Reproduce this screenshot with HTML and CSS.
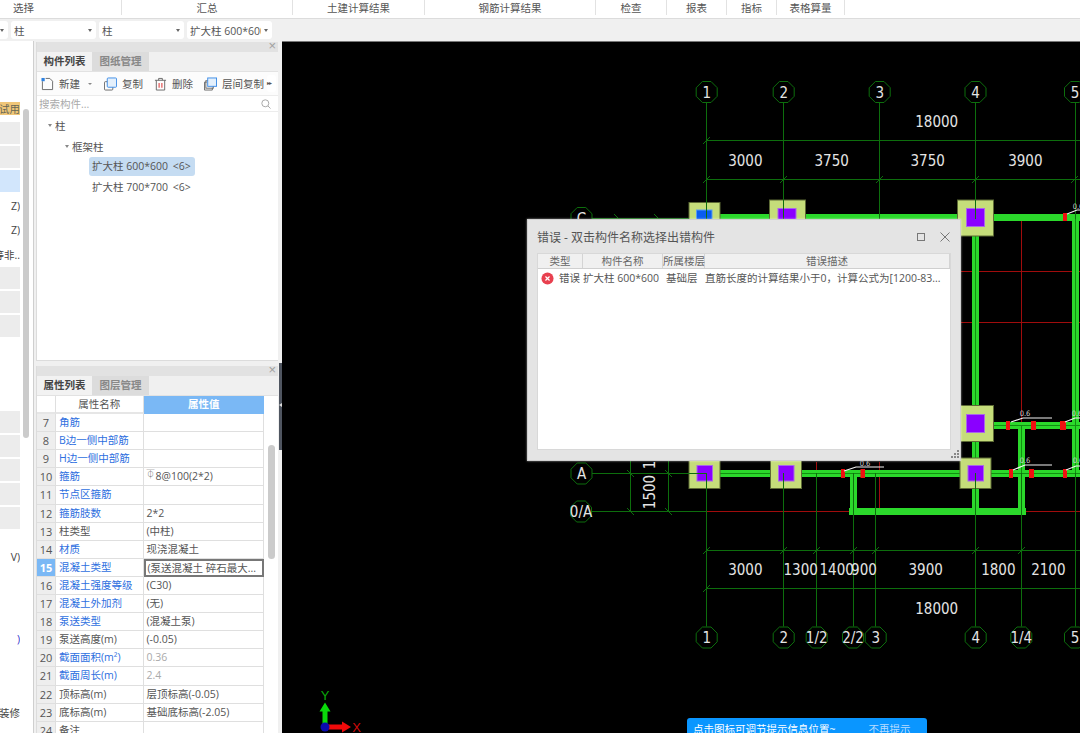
FILE: index.html
```html
<!DOCTYPE html>
<html lang="zh">
<head>
<meta charset="utf-8">
<title>错误 - 双击构件名称选择出错构件</title>
<link rel="stylesheet" href="styles.css">
</head>
<body>
<div class="app">
  <header class="ribbon">
    <span class="rb rb-1"><i class="lead">选择</i></span>
    <span class="rb rb-2">汇总</span>
    <span class="rb rb-3">土建计算结果</span>
    <span class="rb rb-4">钢筋计算结果</span>
    <span class="rb rb-5">检查</span>
    <span class="rb rb-6">报表</span>
    <span class="rb rb-7">指标</span>
    <span class="rb rb-8">表格算量</span>
  </header>
  <div class="selects">
    <div class="sel sel-cut"><b class="caret"></b></div>
    <div class="sel"><span>柱</span><b class="caret"></b></div>
    <div class="sel"><span>柱</span><b class="caret"></b></div>
    <div class="sel"><span class="sel-clip">扩大柱 600*600</span><b class="caret"></b></div>
  </div>
  <main class="workspace">
    <aside class="farleft">
      <div class="scroll-far"></div>
      <div class="fl fl-orange"><span>测试用</span></div>
      <div class="fl fl-grey fl-m1"></div>
      <div class="fl fl-grey"></div>
      <div class="fl fl-blue"></div>
      <div class="fl fl-text"><span>Z)</span></div>
      <div class="fl fl-text"><span>Z)</span></div>
      <div class="fl fl-text"><span>等非..</span></div>
      <div class="fl fl-grey"></div>
      <div class="fl fl-grey"></div>
      <div class="fl fl-grey"></div>
      <div class="fl fl-grey fl-m2"></div>
      <div class="fl fl-grey"></div>
      <div class="fl fl-grey"></div>
      <div class="fl fl-grey"></div>
      <div class="fl fl-grey"></div>
      <div class="fl fl-text fl-m3"><span>V)</span></div>
      <div class="fl fl-text fl-m4 fl-link"><span>)</span></div>
      <div class="fl fl-text fl-m5"><span>装修</span></div>
    </aside>

    <div class="side">
      <section class="panel panel-top">
        <div class="bar"><span class="close">×</span></div>
        <div class="tabs"><span class="tab on">构件列表</span><span class="tab">图纸管理</span></div>
        <div class="tools">
          <span class="tool tool-new">
            <svg class="ico" viewBox="0 0 14 14"><path class="ic-l" d="M1.5 4v9h11V4L9.500 1H5"/><rect class="ic-b" x="0.500" y="0.500" width="3.500" height="3.500"/></svg>新建<i class="mini"></i>
          </span>
          <span class="tool">
            <svg class="ico" viewBox="0 0 14 14"><rect class="ic-l" x="0.500" y="4.500" width="9" height="9" rx="1"/><rect class="ic-f" x="3.500" y="0.500" width="10" height="10" rx="1"/></svg>复制
          </span>
          <span class="tool">
            <svg class="ico" viewBox="0 0 14 14"><path class="ic-l" d="M1 3h12M5 3V1h4v2M2.500 3v10.500h9V3"/><path class="ic-r" d="M5.500 6v5M8.500 6v5"/></svg>删除
          </span>
          <span class="tool">
            <svg class="ico" viewBox="0 0 14 14"><path class="ic-l" d="M3 5H.500v8.500H9V11"/><rect class="ic-l" x="2" y="3.500" width="8" height="8"/><rect class="ic-f" x="4" y="0.500" width="9.500" height="9"/></svg>层间复制
          </span>
          <span class="more">▸▸</span>
        </div>
        <div class="search">
          <span>搜索构件...</span>
          <svg class="mag" viewBox="0 0 10 10"><circle cx="4.300" cy="4.300" r="3.500"/><path d="M7 7l2.500 2.500"/></svg>
        </div>
        <ul class="tree">
          <li class="lv1"><i class="tri"></i>柱</li>
          <li class="lv2"><i class="tri"></i>框架柱</li>
          <li class="lv3"><span class="node sel-node">扩大柱 600*600 <em>&lt;6&gt;</em></span></li>
          <li class="lv3"><span class="node">扩大柱 700*700 <em>&lt;6&gt;</em></span></li>
        </ul>
      </section>

      <section class="panel panel-bottom">
        <div class="bar"><span class="close">×</span></div>
        <div class="tabs"><span class="tab on">属性列表</span><span class="tab">图层管理</span></div>
        <div class="props">
          <div class="c n hd"></div><div class="c hd ctr">属性名称</div><div class="c hd val-hd ctr">属性值</div>
          <div class="c n">7</div><div class="c lk">角筋</div><div class="c"></div>
          <div class="c n">8</div><div class="c lk">B边一侧中部筋</div><div class="c"></div>
          <div class="c n">9</div><div class="c lk">H边一侧中部筋</div><div class="c"></div>
          <div class="c n">10</div><div class="c lk">箍筋</div><div class="c"><sup class="rebar">⏁</sup>8@100(2*2)</div>
          <div class="c n">11</div><div class="c lk">节点区箍筋</div><div class="c"></div>
          <div class="c n">12</div><div class="c lk">箍筋肢数</div><div class="c">2*2</div>
          <div class="c n">13</div><div class="c">柱类型</div><div class="c">(中柱)</div>
          <div class="c n">14</div><div class="c lk">材质</div><div class="c">现浇混凝土</div>
          <div class="c n n-on">15</div><div class="c lk">混凝土类型</div><div class="c v-on">(泵送混凝土 碎石最大...</div>
          <div class="c n">16</div><div class="c lk">混凝土强度等级</div><div class="c">(C30)</div>
          <div class="c n">17</div><div class="c lk">混凝土外加剂</div><div class="c">(无)</div>
          <div class="c n">18</div><div class="c lk">泵送类型</div><div class="c">(混凝土泵)</div>
          <div class="c n">19</div><div class="c">泵送高度(m)</div><div class="c">(-0.05)</div>
          <div class="c n">20</div><div class="c lk">截面面积(m²)</div><div class="c mute">0.36</div>
          <div class="c n">21</div><div class="c lk">截面周长(m)</div><div class="c mute">2.4</div>
          <div class="c n">22</div><div class="c">顶标高(m)</div><div class="c">层顶标高(-0.05)</div>
          <div class="c n">23</div><div class="c">底标高(m)</div><div class="c">基础底标高(-2.05)</div>
          <div class="c n">24</div><div class="c">备注</div><div class="c"></div>
        </div>
        <div class="scroll-props"></div>
      </section>
    </div>

    <div class="splitter"><div class="grip"><i></i></div></div>

    <div class="canvas">
      <svg class="cad" viewBox="282 41 798 692" width="798" height="692">
        <defs>
          <polygon id="bub" points="-4.300,-10.500 4.300,-10.500 10.500,-4.300 10.500,4.300 4.300,10.500 -4.300,10.500 -10.500,4.300 -10.500,-4.300"/>
        </defs>
        <!-- red reference lines -->
        <path class="red" d="M706 271.500H1080M706 322.500H1080M1021.500 218V511M706.500 511.500H1080M706.500 473V511M783.500 473V511M816.500 462V511M879.500 462V511M706 218.500H1080M706 473.500H1080"/>
        <!-- beams -->
        <path class="beam" d="M706 217.500H1080M975.500 217V511M1075.500 217V477M975 425.500H1080M706 473.500H1080M1021.500 425V511.500M853.500 473V511.500M849 511.500H1026"/>
        <path class="beam-c" d="M975.500 217V511M1075.500 217V477M975 425.500H1080M712 473.500H1080M1021.500 425V511M853.500 473V511"/>
        <!-- columns -->
        <rect class="pale" x="689" y="202.500" width="31" height="30"/>
        <rect class="pale" x="769.500" y="200" width="36" height="36"/>
        <rect class="pale" x="957.500" y="200" width="36" height="36"/>
        <rect class="pale" x="957.500" y="405.500" width="36" height="36"/>
        <rect class="pale" x="960" y="458" width="31" height="30.500"/>
        <rect class="pale" x="689" y="458" width="31" height="30.500"/>
        <rect class="pale" x="770.500" y="458" width="31" height="30.500"/>
        <rect class="blue" x="696.500" y="210" width="15.500" height="15.500"/>
        <rect class="pur" x="778" y="208.500" width="18" height="18"/>
        <rect class="pur" x="966.500" y="208.500" width="18" height="18"/>
        <rect class="pur" x="966.500" y="414.500" width="18" height="18"/>
        <rect class="pur" x="968" y="465.500" width="15.500" height="15.500"/>
        <rect class="pur" x="697" y="465.500" width="15.500" height="15.500"/>
        <rect class="pur" x="778.500" y="465.500" width="15.500" height="15.500"/>
        <!-- grid lines -->
        <path class="grn" d="M706.500 103V219M783.500 103V219M879.500 103V219M975.500 103V219M1075.500 103V219M706.500 473V626.500M783.500 473V626.500M816.500 473V626.500M853.500 473V626.500M875.500 473V626.500M975.500 473V626.500M1021.500 473V626.500M1075.500 473V626.500M706 140.500H1080M706 179.500H1080M706 550.500H1080M706 588.500H1080M592 218.500H689M592 473.500H706M592 511.500H706M630.500 460V511M668.500 460V511"/>
        <path class="grn" d="M703 144l7-7M703 183l7-7M780 183l7-7M876 183l7-7M972 183l7-7M1071 183l7-7M703 554l7-7M780 554l7-7M813 554l7-7M850 554l7-7M872 554l7-7M972 554l7-7M1018 554l7-7M703 592l7-7M627 508l7 7M665 508l7 7M665 470l7 7M627 470l7 7M654 214l7 7M614 214l7 7"/>
        <!-- bubbles -->
        <use class="bb" href="#bub" x="706.700" y="92"/>
        <use class="bb" href="#bub" x="783.700" y="92"/>
        <use class="bb" href="#bub" x="879.700" y="92"/>
        <use class="bb" href="#bub" x="975.500" y="92"/>
        <use class="bb" href="#bub" x="1075" y="92"/>
        <use class="bb" href="#bub" x="581.500" y="218"/>
        <use class="bb" href="#bub" x="581.500" y="473.500"/>
        <use class="bb" href="#bub" x="581" y="511.500"/>
        <use class="bb" href="#bub" x="706.700" y="637.500"/>
        <use class="bb" href="#bub" x="783.700" y="637.500"/>
        <use class="bb" href="#bub" x="816.700" y="637.500"/>
        <use class="bb" href="#bub" x="853" y="637.500"/>
        <use class="bb" href="#bub" x="875.700" y="637.500"/>
        <use class="bb" href="#bub" x="975.700" y="637.500"/>
        <use class="bb" href="#bub" x="1021.300" y="637.500"/>
        <use class="bb" href="#bub" x="1075" y="637.500"/>
        <!-- rebar markers -->
        <path class="mk" d="M1063 213h4v8h-4zM1006 421h4v9h-4zM1031 421h5v9h-5zM1060 421h6v9h-6zM1009 469h4v9h-4zM1029 469h5v9h-5zM1063 469h4v9h-4zM841 469h4v9h-4zM860.500 469h4.500v9h-4.500z"/>
        <path class="lead-w" d="M1067 214l10-4h3M1011 422l12-4h29M1065 422l10-4h5M1013 470l12-5h27M1066 470l10-4h4M844 471l12-4h28"/>
        <text class="tx-s" x="1025" y="416">0.6</text>
        <text class="tx-s" x="1025" y="463">0.6</text>
        <text class="tx-s" x="865" y="466">0.6</text>
        <text class="tx-s" x="1077" y="416">0.6</text>
        <text class="tx-s" x="1078" y="463">0.6</text>
        <text class="tx-s" x="1078" y="209">0.6</text>
        <!-- labels -->
        <text class="tx" x="706.700" y="97.500">1</text>
        <text class="tx" x="783.700" y="97.500">2</text>
        <text class="tx" x="879.700" y="97.500">3</text>
        <text class="tx" x="975.500" y="97.500">4</text>
        <text class="tx" x="1075" y="97.500">5</text>
        <text class="tx" x="936.700" y="127">18000</text>
        <text class="tx" x="745.300" y="165.500">3000</text>
        <text class="tx" x="831.700" y="165.500">3750</text>
        <text class="tx" x="927.700" y="165.500">3750</text>
        <text class="tx" x="1025.300" y="165.500">3900</text>
        <text class="tx" x="581.500" y="223.500">C</text>
        <text class="tx" x="581.500" y="479">A</text>
        <text class="tx" x="581" y="517">0/A</text>
        <text class="tx" transform="translate(654.500 492) rotate(-90)">1500</text>
        <text class="tx" transform="translate(654.500 465) rotate(-90)">1</text>
        <text class="tx" x="745.300" y="574.500">3000</text>
        <text class="tx" x="800.700" y="574.500">1300</text>
        <text class="tx" x="836.700" y="574.500">1400</text>
        <text class="tx" x="864" y="574.500">900</text>
        <text class="tx" x="925.700" y="574.500">3900</text>
        <text class="tx" x="998.300" y="574.500">1800</text>
        <text class="tx" x="1048.300" y="574.500">2100</text>
        <text class="tx" x="936.700" y="613.500">18000</text>
        <text class="tx" x="706.700" y="643">1</text>
        <text class="tx" x="783.700" y="643">2</text>
        <text class="tx" x="816.700" y="643">1/2</text>
        <text class="tx" x="853" y="643">2/2</text>
        <text class="tx" x="875.700" y="643">3</text>
        <text class="tx" x="975.700" y="643">4</text>
        <text class="tx" x="1021.300" y="643">1/4</text>
        <text class="tx" x="1075" y="643">5</text>
        <!-- axis -->
        <path class="ax-y" d="M322.500 727V711.500H319.500L325 702.500L330.500 711.500H327.500V727z"/>
        <path class="ax-x" d="M325 724.500H342V721.500L351 727L342 732.500V729.500H325z"/>
        <circle class="ax-o" cx="325" cy="727" r="4.500"/>
        <text class="ax-yt" x="325" y="700">Y</text>
        <text class="ax-xt" x="356.500" y="732">X</text>
      </svg>

      <div class="tip"><span>点击图标可调节提示信息位置~</span><span class="tip-off">不再提示</span></div>

      <div class="dialog">
        <div class="dlg-title">
          <span class="dlg-name">错误 - 双击构件名称选择出错构件</span>
          <svg class="dlg-btn" viewBox="0 0 10 10"><rect x="1.500" y="1.500" width="7" height="7"/></svg>
          <svg class="dlg-btn" viewBox="0 0 10 10"><path d="M0.500 0.500l9 9M9.500 0.500l-9 9"/></svg>
        </div>
        <div class="dlg-table">
          <div class="dlg-row dlg-head">
            <span>类型</span><span>构件名称</span><span>所属楼层</span><span>错误描述</span>
          </div>
          <div class="dlg-row dlg-body">
            <span class="dlg-type">
              <svg class="err" viewBox="0 0 14 14"><circle cx="7" cy="7" r="6.500"/><path d="M4.800 4.800l4.400 4.400M9.200 4.800l-4.400 4.400"/></svg>错误
            </span>
            <span>扩大柱 600*600</span><span class="dlg-floor">基础层</span><span>直筋长度的计算结果小于0，计算公式为[1200-83...</span>
          </div>
        </div>
        <svg class="dlg-grip" viewBox="0 0 9 9"><path d="M7 1h2v2H7zM4 4h2v2H4zM7 4h2v2H7zM1 7h2v2H1zM4 7h2v2H4zM7 7h2v2H7z"/></svg>
      </div>
    </div>
  </main>
</div>
</body>
</html>
```
FILE: styles.css
```css
* { box-sizing: border-box; }
html, body { margin: 0; padding: 0; height: 100%; overflow: hidden; background: #f0f0f0; }
body {
  font-family: "Open Sans", "Noto Sans CJK SC", sans-serif;
  font-size: 10.5px;
  color: #444;
}
i, em { font-style: normal; }
.app { width: 1080px; height: 733px; display: flex; flex-direction: column; overflow: hidden; }

/* ribbon */
.ribbon { height: 19px; background: #fff; border-bottom: 1px solid #dcdcdc; display: flex; flex: none; }
.rb { height: 15px; line-height: 16px; text-align: center; border-right: 1px solid #e2e2e2; font-size: 10.500px; color: #555; flex: none; }
.rb-1 { width: 122px; text-align: left; }
.lead { padding-left: 13px; }
.rb-2 { width: 171px; }
.rb-3 { width: 132px; }
.rb-4 { width: 171px; }
.rb-5 { width: 71px; }
.rb-6 { width: 60px; }
.rb-7 { width: 50px; }
.rb-8 { width: 68px; }

/* selects */
.selects { height: 22px; flex: none; background: #f0f0f0; display: flex; gap: 3px; padding-top: 2px; margin-left: -77px; }
.sel { width: 85px; height: 18px; background: #fff; border-radius: 3px; display: flex; align-items: center; justify-content: space-between; padding: 0 4px 0 3px; font-size: 10.500px; color: #555; flex: none; }
.sel-clip { width: 71px; overflow: hidden; white-space: nowrap; }
.caret { width: 0; height: 0; border: 2.500px solid transparent; border-top: 3px solid #666; border-bottom: 0; flex: none; }
.sel-cut { justify-content: flex-end; }

/* workspace */
.workspace { height: 692px; flex: none; display: flex; }

/* far-left clipped panel */
.farleft { width: 34px; flex: none; background: #fff; border-right: 1px solid #cfcfcf; position: relative; padding-top: 61px; overflow: hidden; }
.scroll-far { position: absolute; left: 23px; top: 68px; width: 6px; height: 329px; background: #cbcbcb; border-radius: 3px; }
.fl { width: 20px; height: 22px; margin-bottom: 2px; display: flex; justify-content: flex-end; align-items: center; overflow: hidden; white-space: nowrap; flex: none; }
.fl-orange { height: 13px; margin-bottom: 7px; background: #f0c678; color: #665; }
.fl-grey { background: #ececec; }
.fl-blue { background: #d2e6fc; margin-bottom: 2px; }
.fl-text { height: 24px; margin-bottom: 0; }
.fl-text + .fl-grey { margin-top: 1px; }
.fl-m2 { margin-top: 74px; }
.fl-m3 { margin-top: 16px; }
.fl-m4 { margin-top: 58px; color: #33c; }
.fl-m5 { margin-top: 49px; }

/* side panels */
.side { width: 242px; margin-left: 2px; flex: none; display: flex; flex-direction: column; gap: 5px; padding-top: 1px; }
.panel { background: #fff; border-left: 1px solid #dcdcdc; display: flex; flex-direction: column; position: relative; overflow: hidden; }
.panel-top { height: 319px; border-bottom: 1px solid #dcdcdc; }
.panel-bottom { flex: 1; min-height: 0; }
.bar { height: 10px; background: #e2e2e2; position: relative; flex: none; }
.close { position: absolute; right: 2px; top: -3px; font-size: 13px; line-height: 14px; color: #a0a0a0; font-family: "Liberation Sans", sans-serif; }
.tabs { height: 20px; background: #f0f0f0; display: flex; flex: none; border-bottom: 1px solid #e2e2e2; }
.tab { height: 19px; line-height: 19px; width: 57px; text-align: center; background: #dcdcdc; color: #888; font-weight: 600; }
.tab.on { width: 55px; background: #f2f2f2; color: #444; font-weight: 700; }

.tools { height: 24px; flex: none; background: #fcfcfc; border-bottom: 1px solid #ececec; display: flex; align-items: center; padding-left: 4px; position: relative; white-space: nowrap; color: #555; }
.tool { display: flex; align-items: center; gap: 5px; margin-right: 11px; }
.tool-new { margin-right: 12px; }
.ico { width: 13px; height: 14px; flex: none; }
.ic-l { fill: none; stroke: #666; stroke-width: 1; }
.ic-b { fill: #2f82e0; }
.ic-f { fill: #e4f0fc; stroke: #3a8ae6; stroke-width: 1; }
.ic-r { fill: none; stroke: #e04848; stroke-width: 1.200; }
.mini { width: 0; height: 0; border: 2px solid transparent; border-top: 2.500px solid #888; border-bottom: 0; margin-left: 3px; }
.more { position: absolute; left: 230px; top: 3px; width: 9px; height: 17px; background: #fff; border-radius: 3px; font-size: 6px; line-height: 17px; letter-spacing: -1px; color: #555; }

.search { height: 16px; flex: none; background: #fff; border-bottom: 1px solid #ececec; display: flex; align-items: center; justify-content: space-between; padding: 0 7px 0 2px; color: #aaa; }
.mag { width: 10px; height: 10px; fill: none; stroke: #aaa; stroke-width: 1; }

.tree { list-style: none; margin: 0; padding: 3px 0 0; }
.tree li { height: 20.700px; display: flex; align-items: center; white-space: nowrap; color: #555; }
.lv1 { padding-left: 11px; }
.lv2 { padding-left: 28px; }
.lv3 { padding-left: 52px; }
.tri { width: 0; height: 0; border: 2.500px solid transparent; border-top: 3px solid #888; border-bottom: 0; margin-right: 3px; }
.node { height: 19px; line-height: 19px; padding: 0 3px; border-radius: 3px; width: 106px; }
.node em { margin-left: 2px; }
.sel-node { background: #c5dcf2; }

/* props */
.props { display: grid; grid-template-columns: 19px 87.500px 120.500px; grid-auto-rows: 18.100px; width: 227px; background: #fff; flex: none; }
.c { border-right: 1px solid #dfdfdf; border-bottom: 1px solid #dfdfdf; padding: 0 3px; line-height: 17px; white-space: nowrap; overflow: hidden; color: #555; }
.ctr { text-align: center; }
.n { background: #eeeeee; text-align: center; padding: 0; font-size: 11px; }
.hd.n { background: #fff; }
.hd { border-bottom: 2px solid #e6e6e6; }
.val-hd { background: #7ab8f5; color: #fff; font-weight: 600; border: 0; }
.lk { color: #2e6fe0; }
.n-on { background: #7ab8f5; color: #fff; font-weight: 700; }
.v-on { border: 2px solid #777; line-height: 14px; padding: 0 2px; color: #555; }
.mute { color: #aaa; }
.rebar { font-size: 8px; line-height: 8px; vertical-align: 3px; margin-right: 1px; }
.scroll-props { position: absolute; left: 231px; top: 79px; width: 7px; height: 114px; background: #cbcbcb; border-radius: 4px; }

/* splitter */
.splitter { width: 3px; flex: none; background: #f0f0f0; position: relative; margin-left: 1px; }
.grip { position: absolute; left: 0; top: 322px; width: 3px; height: 87px; background: #4f5560; }
.grip i { position: absolute; left: 0; top: 40px; border: 2.500px solid transparent; border-right: 3px solid #ddd; border-left: 0; }

/* canvas */
.canvas { flex: 1; min-width: 0; background: #000; position: relative; overflow: hidden; border-top: 1px solid #777; }
.cad { display: block; position: absolute; left: 0; top: -1px; }
.red { fill: none; stroke: #a00c0c; stroke-width: 1; }
.beam { fill: none; stroke: #2bd82b; stroke-width: 7; }
.beam-c { fill: none; stroke: #118f11; stroke-width: 1; }
.pale { fill: #c5dd7a; stroke: #5d6a35; stroke-width: 1; }
.pur { fill: #8a00ff; stroke: #a868e8; stroke-width: 1; }
.blue { fill: #0b5cf0; stroke: #5a9cf0; stroke-width: 1; }
.grn { fill: none; stroke: #0d6e0d; stroke-width: 1; }
.bb { fill: none; stroke: #0d6e0d; stroke-width: 1; }
.mk { fill: #f01010; }
.lead-w { fill: none; stroke: #f2f2f2; stroke-width: 1.200; }
.tx { fill: #e4e4e4; font-family: "DejaVu Sans Condensed", "DejaVu Sans", sans-serif; font-stretch: condensed; font-size: 15px; text-anchor: middle; }
.tx-s { fill: #cfcfcf; font-family: "DejaVu Sans Condensed", "DejaVu Sans", sans-serif; font-size: 7.500px; text-anchor: middle; }
.ax-y { fill: #0ad80a; }
.ax-x { fill: #f00a0a; }
.ax-o { fill: #0a0ab0; }
.ax-yt { fill: #0aa80a; font-family: "Liberation Sans", sans-serif; font-size: 13px; text-anchor: middle; }
.ax-xt { fill: #d00a0a; font-family: "Liberation Sans", sans-serif; font-size: 13px; text-anchor: middle; }

/* tip */
.tip { position: absolute; left: 405px; top: 676px; width: 240px; height: 40px; background: #0a96ff; border-radius: 3px; color: #fff; padding: 4px 6px 0; display: flex; font-size: 10.500px; line-height: 14px; white-space: nowrap; }
.tip-off { margin-left: 33px; color: #b8dcff; }

/* dialog */
.dialog { position: absolute; left: 245px; top: 177px; width: 434px; height: 242px; background: #e4e4e4; border: 1px solid #d0d0d0; box-shadow: 0 0 2px rgba(255,255,255,.6); padding: 0 9px; display: flex; flex-direction: column; }
.dlg-title { height: 33px; flex: none; display: flex; align-items: center; gap: 14px; font-size: 12px; color: #555; padding-right: 1px; }
.dlg-name { flex: 1; }
.dlg-btn { width: 10px; height: 10px; fill: none; stroke: #777; stroke-width: 1; }
.dlg-table { flex: 1; min-height: 0; background: #fff; border: 1px solid #d8d8d8; margin-bottom: 10px; }
.dlg-row { display: grid; grid-template-columns: 45px 80px 42px 1fr; white-space: nowrap; }
.dlg-head { height: 15px; line-height: 14px; background: #f0f0f0; border-bottom: 1px solid #cfcfcf; text-align: center; color: #666; }
.dlg-head span { border-right: 1px solid #d4d4d4; }
.dlg-body { height: 19px; line-height: 19px; color: #555; }
.dlg-type { display: flex; align-items: center; gap: 5px; padding-left: 3px; }
.dlg-floor { padding-left: 3px; }
.err { width: 13px; height: 13px; flex: none; }
.err circle { fill: #e8404f; }
.err path { fill: none; stroke: #fff; stroke-width: 1.300; }
.dlg-grip { position: absolute; right: 1px; bottom: 2px; width: 9px; height: 9px; fill: #888; }
```
